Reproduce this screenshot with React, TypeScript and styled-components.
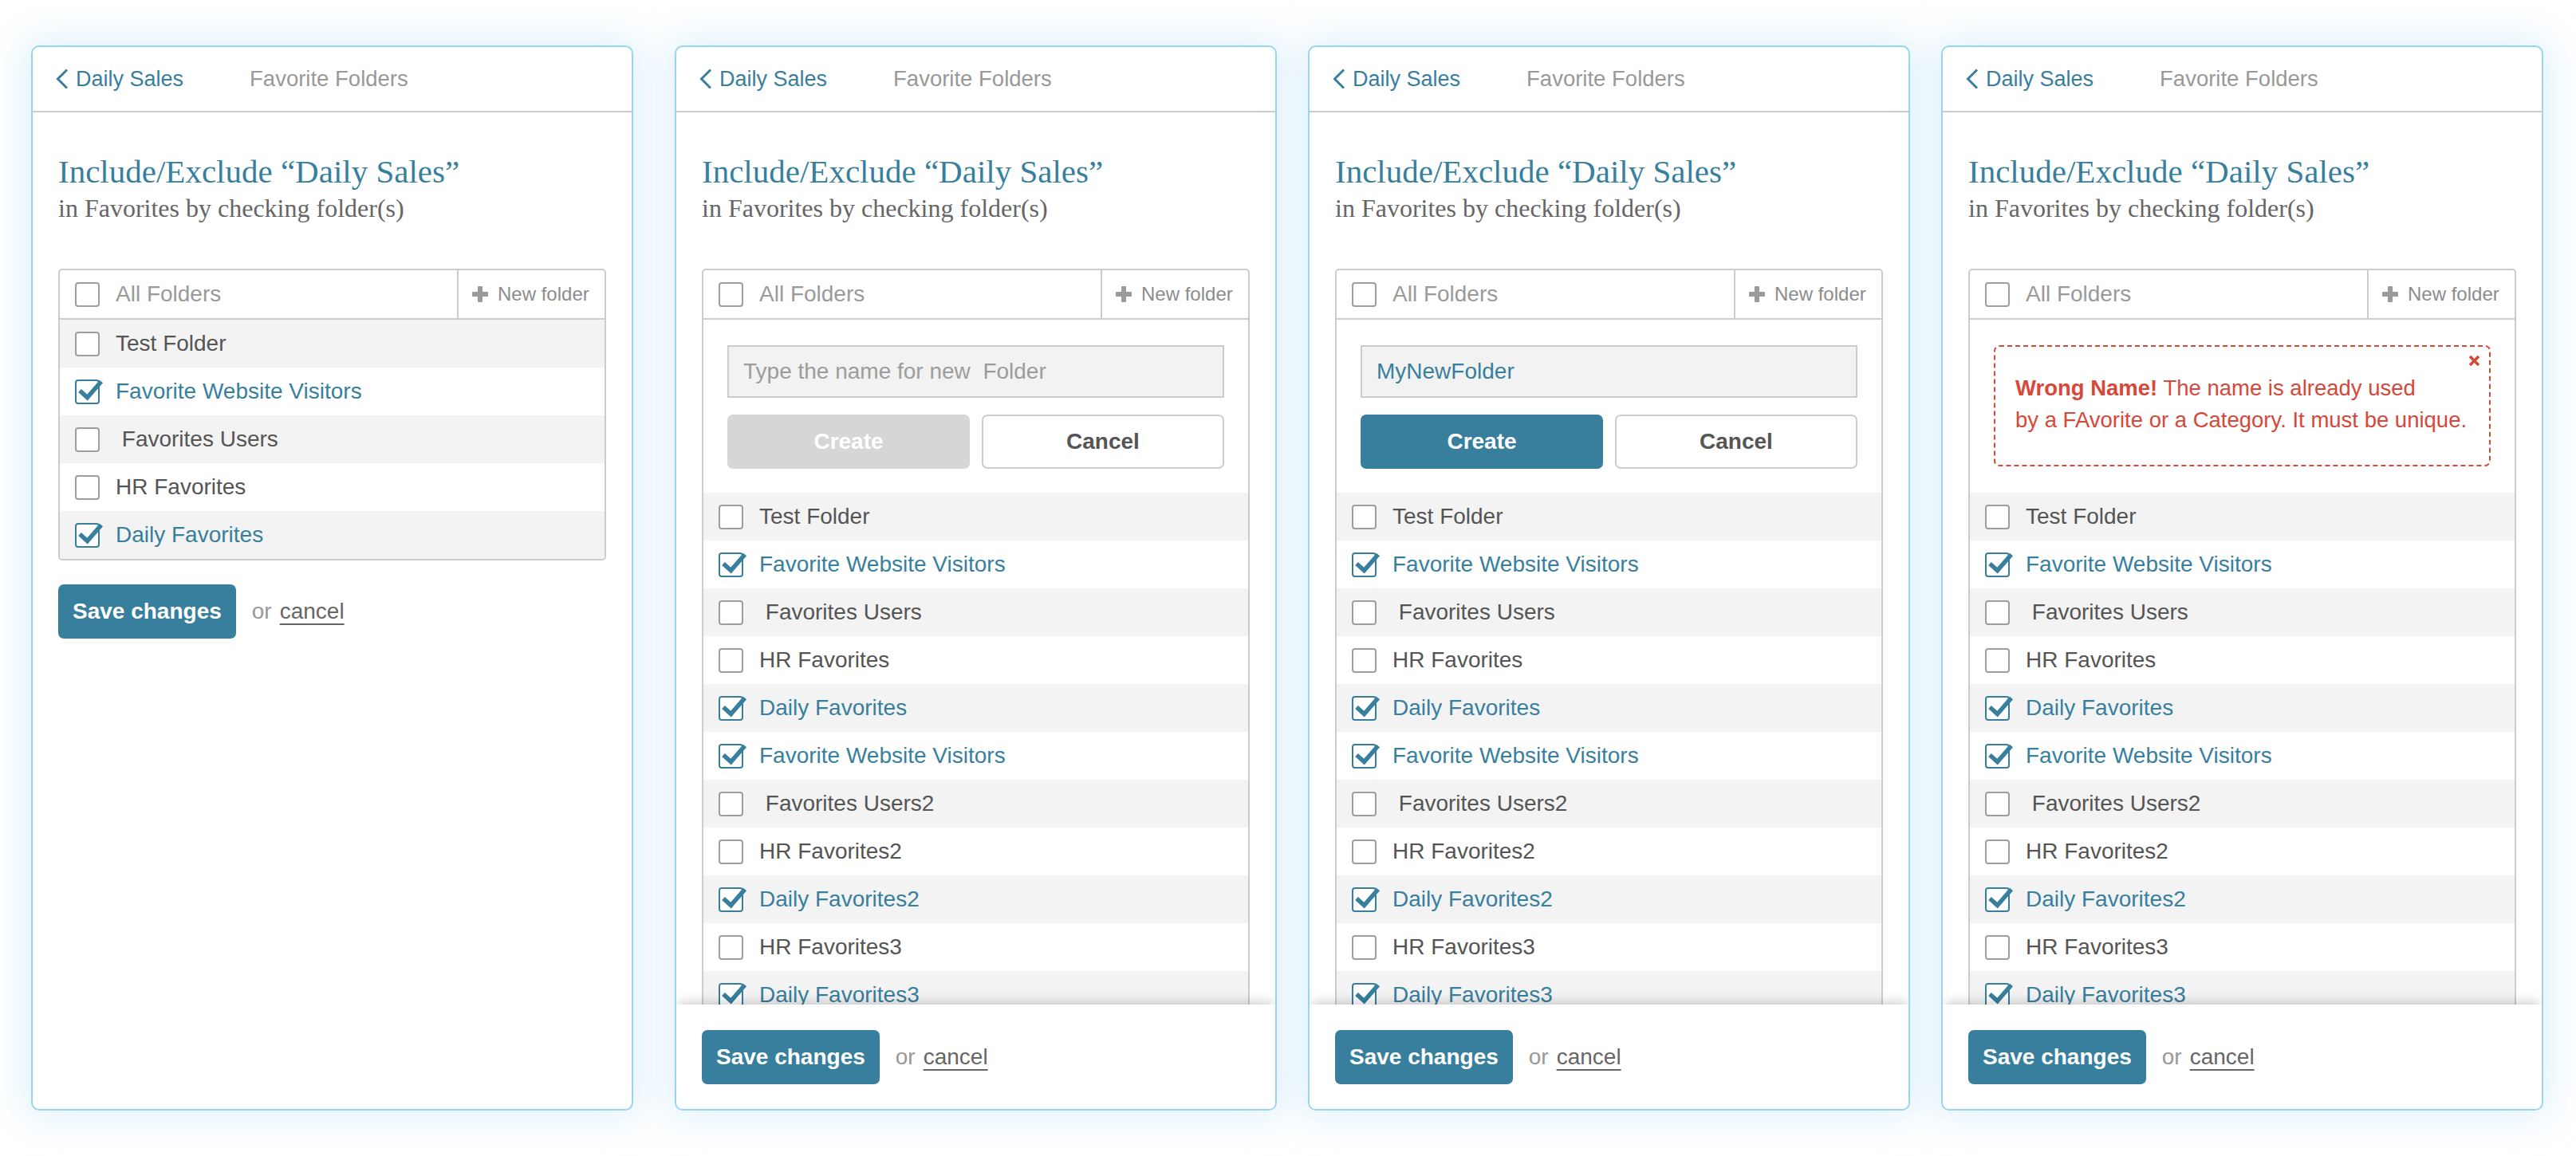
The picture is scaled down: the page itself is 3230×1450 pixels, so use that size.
import React from "react";
import styled, { createGlobalStyle } from "styled-components";

const TEAL = "#387f9e";
const RED = "#d6483a";

const GlobalStyle = createGlobalStyle`
  html, body { margin: 0; padding: 0; background: #ffffff; }
  body { font-family: "Liberation Sans", Arial, sans-serif; }
  * { box-sizing: border-box; }
`;

const Page = styled.main`
  width: 3230px;
  height: 1450px;
  padding: 57px 0 0 39px;
  display: flex;
  align-items: flex-start;
  background: #ffffff;
  overflow: hidden;
`;

const Panel = styled.section<{ $gap: number }>`
  flex: none;
  width: 755px;
  height: 1336px;
  margin-right: ${(p) => p.$gap}px;
  border: 2px solid #98d5f2;
  border-radius: 10px;
  background: #ffffff;
  box-shadow: 0 0 48px 8px rgba(168, 218, 245, 0.38);
  display: flex;
  flex-direction: column;
  overflow: hidden;
`;

const Header = styled.header`
  flex: none;
  height: 82px;
  padding-left: 29px;
  border-bottom: 2px solid #cccccc;
  display: flex;
  align-items: center;
  gap: 83px;
  font-size: 27px;
`;

const Back = styled.a`
  display: flex;
  align-items: center;
  gap: 9px;
  color: ${TEAL};
  text-decoration: none;
`;

const Crumb = styled.span`
  color: #999999;
  font-size: 27.5px;
`;

const Body = styled.div`
  flex: 1;
  min-height: 0;
  overflow: hidden;
  padding: 0 32px;
`;

const Title = styled.h1`
  margin: 51px 0 0;
  font-family: "Liberation Serif", "Times New Roman", serif;
  font-weight: normal;
  font-size: 41px;
  line-height: 46px;
  color: ${TEAL};
`;

const Subtitle = styled.p`
  margin: 5px 0 0;
  font-family: "Liberation Serif", "Times New Roman", serif;
  font-size: 32px;
  line-height: 37px;
  color: #666666;
`;

const ListBox = styled.div`
  margin-top: 57px;
  border: 2px solid #cccccc;
  border-radius: 5px;
  overflow: hidden;
  background: #ffffff;
`;

const ListHead = styled.div`
  height: 62px;
  display: flex;
  border-bottom: 2px solid #cccccc;
`;

const AllCell = styled.label`
  flex: 1;
  display: flex;
  align-items: center;
  gap: 20px;
  padding-left: 19px;
  font-size: 28px;
  color: #9a9a9a;
`;

const NewFolderCell = styled.button`
  flex: none;
  width: 185px;
  border: none;
  border-left: 2px solid #cccccc;
  background: transparent;
  display: flex;
  align-items: center;
  gap: 12px;
  padding: 0 0 0 17px;
  font-family: "Liberation Sans", Arial, sans-serif;
  font-size: 24px;
  color: #8c8c8c;
`;

const Row = styled.label<{ $shade: boolean; $on: boolean }>`
  height: 60px;
  display: flex;
  align-items: center;
  gap: 20px;
  padding-left: 19px;
  font-size: 28px;
  color: ${(p) => (p.$on ? TEAL : "#555555")};
  background: ${(p) => (p.$shade ? "#f3f3f3" : "#ffffff")};
`;

const RowText = styled.span`
  white-space: pre;
`;

const Box = styled.span<{ $on: boolean }>`
  position: relative;
  flex: none;
  width: 31px;
  height: 31px;
  border: 2px solid ${(p) => (p.$on ? TEAL : "#9e9e9e")};
  border-radius: 4px;
  background: #ffffff;
`;

const CheckMark = styled.svg`
  position: absolute;
  left: -2px;
  top: -2px;
  width: 31px;
  height: 31px;
  overflow: visible;
`;

const FormArea = styled.div`
  height: 217px;
  padding: 32px 30px 0;
`;

const NameInput = styled.input<{ $filled: boolean }>`
  display: block;
  width: 100%;
  height: 66px;
  border: 2px solid #cccccc;
  background: #f2f2f2;
  padding: 0 18px;
  font-family: "Liberation Sans", Arial, sans-serif;
  font-size: 28px;
  color: ${(p) => (p.$filled ? TEAL : "#999999")};
  outline: none;
  &::placeholder {
    color: #9c9c9c;
    white-space: pre;
  }
`;

const FormButtons = styled.div`
  margin-top: 21px;
  display: grid;
  grid-template-columns: 1fr 1fr;
  gap: 15px;
`;

const FormButton = styled.button<{ $kind: "primary" | "disabled" | "ghost" }>`
  height: 68px;
  border-radius: 7px;
  font-family: "Liberation Sans", Arial, sans-serif;
  font-weight: bold;
  font-size: 28px;
  border: 2px solid
    ${(p) => (p.$kind === "ghost" ? "#cccccc" : p.$kind === "primary" ? TEAL : "#d6d6d6")};
  background: ${(p) =>
    p.$kind === "ghost" ? "#ffffff" : p.$kind === "primary" ? TEAL : "#d6d6d6"};
  color: ${(p) => (p.$kind === "ghost" ? "#555555" : "#ffffff")};
`;

const ErrorBox = styled.div`
  position: relative;
  height: 152px;
  border: 2px dashed ${RED};
  border-radius: 7px;
  padding: 32px 8px 0 25px;
  font-size: 27.5px;
  line-height: 40px;
  white-space: nowrap;
  color: ${RED};
`;

const ErrorClose = styled.svg`
  position: absolute;
  top: 10px;
  right: 11px;
  width: 15px;
  height: 15px;
`;

const Actions = styled.div`
  display: flex;
  align-items: center;
  font-size: 28px;
`;

const InlineActions = styled(Actions)`
  margin-top: 30px;
`;

const SaveButton = styled.button`
  height: 68px;
  padding: 0 18px;
  border: none;
  border-radius: 7px;
  background: ${TEAL};
  color: #ffffff;
  font-family: "Liberation Sans", Arial, sans-serif;
  font-weight: bold;
  font-size: 28px;
  white-space: nowrap;
`;

const Or = styled.span`
  margin-left: 20px;
  color: #999999;
`;

const CancelLink = styled.a`
  margin-left: 10px;
  color: #666666;
  text-decoration: underline;
  text-decoration-thickness: 2px;
  text-underline-offset: 6px;
`;

const Footer = styled.footer`
  position: relative;
  z-index: 1;
  flex: none;
  height: 131px;
  padding-left: 32px;
  display: flex;
  align-items: center;
  background: #ffffff;
  box-shadow: 0 -7px 12px -3px rgba(0, 0, 0, 0.17);
`;

type Folder = { name: string; on: boolean };

const shortList: Folder[] = [
  { name: "Test Folder", on: false },
  { name: "Favorite Website Visitors", on: true },
  { name: " Favorites Users", on: false },
  { name: "HR Favorites", on: false },
  { name: "Daily Favorites", on: true },
];

const longList: Folder[] = [
  ...shortList,
  { name: "Favorite Website Visitors", on: true },
  { name: " Favorites Users2", on: false },
  { name: "HR Favorites2", on: false },
  { name: "Daily Favorites2", on: true },
  { name: "HR Favorites3", on: false },
  { name: "Daily Favorites3", on: true },
];

function Check({ on }: { on: boolean }) {
  return (
    <Box $on={on}>
      {on && (
        <CheckMark viewBox="0 0 31 31">
          <polyline
            points="6,14 15.5,22.5 33,2.5"
            fill="none"
            stroke={TEAL}
            strokeWidth="5.5"
            strokeLinejoin="miter"
          />
        </CheckMark>
      )}
    </Box>
  );
}

function Chevron() {
  return (
    <svg width="16" height="26" viewBox="0 0 16 26">
      <polyline points="14,1.5 2.5,13 14,24.5" fill="none" stroke={TEAL} strokeWidth="3" />
    </svg>
  );
}

function Plus() {
  return (
    <svg width="20" height="20" viewBox="0 0 20 20">
      <rect x="0" y="7" width="20" height="6" rx="1" fill="#9a9a9a" />
      <rect x="7" y="0" width="6" height="20" rx="1" fill="#9a9a9a" />
    </svg>
  );
}

type Mode = "plain" | "empty" | "filled" | "error";

function SaveRow() {
  return (
    <>
      <SaveButton>Save changes</SaveButton>
      <Or>or</Or>
      <CancelLink>cancel</CancelLink>
    </>
  );
}

function FolderPanel({ mode, gap }: { mode: Mode; gap: number }) {
  const rows = mode === "plain" ? shortList : longList;
  return (
    <Panel $gap={gap}>
      <Header>
        <Back>
          <Chevron />
          Daily Sales
        </Back>
        <Crumb>Favorite Folders</Crumb>
      </Header>
      <Body>
        <Title>Include/Exclude “Daily Sales”</Title>
        <Subtitle>in Favorites by checking folder(s)</Subtitle>
        <ListBox>
          <ListHead>
            <AllCell>
              <Check on={false} />
              All Folders
            </AllCell>
            <NewFolderCell>
              <Plus />
              New folder
            </NewFolderCell>
          </ListHead>
          {(mode === "empty" || mode === "filled") && (
            <FormArea>
              <NameInput
                $filled={mode === "filled"}
                readOnly
                placeholder="Type the name for new  Folder"
                value={mode === "filled" ? "MyNewFolder" : ""}
              />
              <FormButtons>
                <FormButton $kind={mode === "filled" ? "primary" : "disabled"}>Create</FormButton>
                <FormButton $kind="ghost">Cancel</FormButton>
              </FormButtons>
            </FormArea>
          )}
          {mode === "error" && (
            <FormArea>
              <ErrorBox>
                <ErrorClose viewBox="0 0 15 15">
                  <line x1="2" y1="2" x2="13" y2="13" stroke={RED} strokeWidth="3.6" />
                  <line x1="13" y1="2" x2="2" y2="13" stroke={RED} strokeWidth="3.6" />
                </ErrorClose>
                <b>Wrong Name!</b> The name is already used
                <br />
                by a FAvorite or a Category. It must be unique.
              </ErrorBox>
            </FormArea>
          )}
          {rows.map((r, i) => (
            <Row key={i} $shade={i % 2 === 0} $on={r.on}>
              <Check on={r.on} />
              <RowText>{r.name}</RowText>
            </Row>
          ))}
        </ListBox>
        {mode === "plain" && (
          <InlineActions>
            <SaveRow />
          </InlineActions>
        )}
      </Body>
      {mode !== "plain" && (
        <Footer>
          <Actions>
            <SaveRow />
          </Actions>
        </Footer>
      )}
    </Panel>
  );
}

export default function App() {
  return (
    <>
      <GlobalStyle />
      <Page>
        <FolderPanel mode="plain" gap={52} />
        <FolderPanel mode="empty" gap={39} />
        <FolderPanel mode="filled" gap={39} />
        <FolderPanel mode="error" gap={0} />
      </Page>
    </>
  );
}
